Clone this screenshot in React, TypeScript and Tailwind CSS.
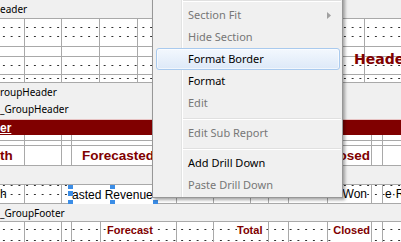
import React from "react";

const DOT_A =
  "bg-fixed [background-image:radial-gradient(circle,#303030_0.6px,transparent_1px)] [background-size:7.75px_9px] [background-position:0_5px] shadow-[inset_0_-4px_0_#ffffff]";
const DOT_C =
  "bg-fixed [background-image:radial-gradient(circle,#303030_0.6px,transparent_1px)] [background-size:7.75px_9px] [background-position:0_7px]";
const DOT_D =
  "bg-fixed [background-image:radial-gradient(circle,#303030_0.6px,transparent_1px)] [background-size:7.75px_9px] [background-position:0_2px]";
const DOT_8 =
  "bg-fixed [background-image:radial-gradient(circle,#303030_0.6px,transparent_1px)] [background-size:7.75px_9px] [background-position:0_1px]";
const DOT_10 =
  "bg-fixed [background-image:radial-gradient(circle,#303030_0.6px,transparent_1px)] [background-size:7.75px_11px] [background-position:0_4px]";

function Cell({ className = "", children }: { className?: string; children?: React.ReactNode }) {
  return <div className={`border-r border-b border-[#a9a9a9] ${className}`}>{children}</div>;
}

function Band({ text, className }: { text: string; className: string }) {
  return (
    <div className={`flex items-center bg-[#f0f0f0] text-[10px] leading-[12px] text-black font-['Noto_Sans',sans-serif] ${className}`}>
      <span className="whitespace-nowrap">{text}</span>
    </div>
  );
}

function TopRegion() {
  const rows = [DOT_A, "", DOT_C, DOT_D];
  return (
    <div className="relative grid grid-cols-[25px_37px_38px_38px_227px_65px] grid-rows-[28px_10px_18px_8px] border-t border-[#a9a9a9] bg-white">
      {rows.flatMap((r, ri) =>
        Array.from({ length: 6 }, (_, ci) => <Cell key={`${ri}-${ci}`} className={r} />)
      )}
      <span className="absolute left-[354px] top-[32px] whitespace-nowrap text-[14px] leading-[16px] font-bold text-[#800000] font-['DejaVu_Sans',sans-serif]">
        Header
      </span>
    </div>
  );
}

function Region6() {
  return (
    <div className="grid grid-cols-[25px_37px_10px_300px_11px_47px] grid-rows-[6px_5px_20px] bg-white font-['Liberation_Sans',sans-serif]">
      {Array.from({ length: 12 }, (_, i) => (
        <Cell key={i} />
      ))}
      <Cell className="flex items-center overflow-hidden">
        <span className="text-[13.5px] font-bold text-[#800000] leading-none">th</span>
      </Cell>
      <Cell />
      <Cell />
      <Cell className="flex items-center justify-between overflow-hidden pl-[10px] pr-[1px]">
        <span className="text-[13.5px] font-bold text-[#800000] leading-none whitespace-nowrap">Forecasted</span>
        <span className="text-[13.5px] font-bold text-[#800000] leading-none whitespace-nowrap">Closed</span>
      </Cell>
      <Cell />
      <Cell />
    </div>
  );
}

function Handle({ className }: { className: string }) {
  return <div className={`absolute bg-[#3b8de6] ${className}`} />;
}

function Region8() {
  return (
    <div className="relative grid grid-cols-[25px_37px_115px_37px_37px_18px_20px_39px_44px_11px_47px] grid-rows-[19px] border-t border-[#a9a9a9] bg-white text-[12px] leading-none text-black font-['Liberation_Sans',sans-serif]">
      <Cell className={`flex items-center overflow-hidden ${DOT_8}`}>
        <span>h</span>
      </Cell>
      <Cell className={DOT_8} />
      <Cell className={DOT_8} />
      <Cell className={DOT_8} />
      <Cell className={DOT_8} />
      <Cell className={DOT_8} />
      <Cell className={DOT_8} />
      <Cell className={DOT_8} />
      <Cell className={`flex items-center justify-end pr-[4px] ${DOT_8}`}>
        <span className="bg-white">Won</span>
      </Cell>
      <Cell className={DOT_8} />
      <Cell className={`flex items-center pl-[2px] ${DOT_8}`}>
        <span className="bg-white whitespace-nowrap">e·Revenue</span>
      </Cell>
      <div className="absolute left-[68px] top-0 w-[90px] h-[19px] bg-white flex items-center pl-[4px]">
        <span className="whitespace-nowrap">asted Revenue</span>
        <Handle className="left-0 top-0 w-[5px] h-[4px]" />
        <Handle className="left-0 top-[6px] w-[5px] h-[5px]" />
        <Handle className="left-0 bottom-0 w-[5px] h-[4px]" />
        <Handle className="left-[42px] top-0 w-[5px] h-[4px]" />
        <Handle className="left-[42px] bottom-0 w-[5px] h-[4px]" />
        <Handle className="right-0 bottom-0 w-[5px] h-[4px]" />
      </div>
    </div>
  );
}

function Region10() {
  return (
    <div className="grid grid-cols-[25px_37px_10px_29px_76px_37px_55px_20px_39px_44px_11px_47px] grid-rows-[30px] border-t border-[#a9a9a9] bg-white text-[11px] leading-[13px] font-bold text-[#800000] font-['Liberation_Sans',sans-serif]">
      <Cell className={DOT_10} />
      <Cell className={DOT_10} />
      <Cell className={DOT_10} />
      <Cell className={DOT_10} />
      <Cell className={`pl-[6px] pt-[2px] ${DOT_10}`}>
        <span className="bg-white">Forecast</span>
      </Cell>
      <Cell className={DOT_10} />
      <Cell className={`pl-[23px] pt-[2px] ${DOT_10}`}>
        <span className="bg-white">Total</span>
      </Cell>
      <Cell className={DOT_10} />
      <Cell className={DOT_10} />
      <Cell className={`flex justify-end pr-[1px] pt-[2px] ${DOT_10}`}>
        <span className="bg-white">Closed</span>
      </Cell>
      <Cell className={DOT_10} />
      <Cell className={DOT_10} />
    </div>
  );
}

type Item =
  | { kind: "sep" }
  | { kind: "item"; label: string; disabled?: boolean; hover?: boolean; sub?: boolean };

const ITEMS: Item[] = [
  { kind: "sep" },
  { kind: "item", label: "Section Fit", disabled: true, sub: true },
  { kind: "item", label: "Hide Section", disabled: true },
  { kind: "item", label: "Format Border", hover: true },
  { kind: "item", label: "Format" },
  { kind: "item", label: "Edit", disabled: true },
  { kind: "sep" },
  { kind: "item", label: "Edit Sub Report", disabled: true },
  { kind: "sep" },
  { kind: "item", label: "Add Drill Down" },
  { kind: "item", label: "Paste Drill Down", disabled: true },
];

function Menu() {
  return (
    <div className="absolute left-[152px] top-[-5px] w-[191px] border border-[#979797] bg-[#f0f0f0] pb-[1px] shadow-[2px_2px_3px_rgba(0,0,0,0.35)] font-['Noto_Sans',sans-serif] text-[11px]">
      <div className="absolute left-[28px] top-0 bottom-0 w-[1px] bg-[#e2e3e3]" />
      <div className="absolute left-[29px] top-0 bottom-0 w-[1px] bg-white" />
      <div className="relative flex flex-col">
        {ITEMS.map((it, i) =>
          it.kind === "sep" ? (
            <div key={i} className="h-[8px] pt-[4px] ml-[30px] mr-[1px]">
              <div className="h-[1px] bg-[#e0e0e0]" />
              <div className="h-[1px] bg-white" />
            </div>
          ) : (
            <div
              key={i}
              className={
                it.hover
                  ? "ml-[3px] mr-[2px] h-[22px] flex items-center pl-[31px] rounded-[3px] border border-[#a9caee] bg-gradient-to-b from-[#f3f8fe] to-[#dde9f8] shadow-[inset_0_0_0_1px_rgba(255,255,255,0.6)] text-black"
                  : `ml-[3px] mr-[2px] h-[22px] flex items-center pl-[32px] ${it.disabled ? "text-[#777777]" : "text-black"}`
              }
            >
              <span className="whitespace-nowrap">{it.label}</span>
              {it.sub && (
                <svg className="ml-auto mr-[9px]" width="4" height="7" viewBox="0 0 4 7">
                  <path d="M0 0 L4 3.5 L0 7 Z" fill="#a0a0a0" />
                </svg>
              )}
            </div>
          )
        )}
      </div>
    </div>
  );
}

export default function App() {
  return (
    <div className="relative w-[401px] h-[242px] overflow-hidden bg-[#f0f0f0]">
      <div className="w-[430px]">
        <Band text="eader" className="h-[18px]" />
        <TopRegion />
        <Band text="roupHeader" className="h-[17px]" />
        <Band text="_GroupHeader" className="h-[20px] border-b border-[#e8c3c3] pb-[2px]" />
        <div className="h-[15px] bg-[#800000] flex items-center">
          <span className="text-[12px] leading-none font-bold text-white underline font-['Liberation_Sans',sans-serif]">er</span>
        </div>
        <Region6 />
        <div className="h-[18px]" />
        <Region8 />
        <Band text="_GroupFooter" className="h-[17px]" />
        <Region10 />
      </div>
      <Menu />
    </div>
  );
}
